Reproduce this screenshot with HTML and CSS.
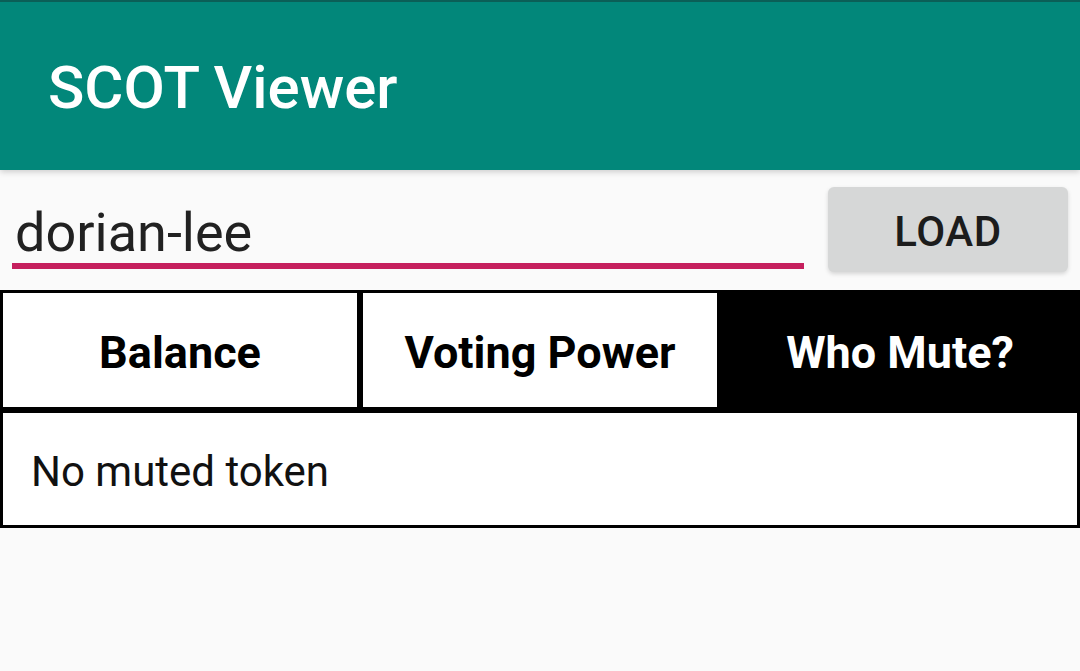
FILE: index.html
```html
<!DOCTYPE html>
<html>
<head>
<meta charset="utf-8">
<link rel="stylesheet" href="styles.css">
</head>
<body>
<header class="appbar">
  <h1 class="title">SCOT Viewer</h1>
</header>
<div class="search-row">
  <div class="field">dorian-lee</div>
  <button class="load-btn">LOAD</button>
</div>
<div class="tabs">
  <div class="tab">Balance</div>
  <div class="tab">Voting Power</div>
  <div class="tab tab-active">Who Mute?</div>
</div>
<div class="result">No muted token</div>
</body>
</html>
```

FILE: styles.css
```css
html, body {
  margin: 0;
  padding: 0;
  background: #fafafa;
  font-family: Roboto, "Noto Sans", sans-serif;
  width: 1080px;
  height: 671px;
  overflow: hidden;
}

.appbar {
  box-sizing: border-box;
  height: 170px;
  background: #02877a;
  border-top: 2px solid #0b5f57;
  display: flex;
  align-items: center;
  padding-left: 48px;
  box-shadow: 0 2px 6px rgba(0, 0, 0, 0.18);
  position: relative;
  z-index: 1;
}

.title {
  margin: 0;
  color: #ffffff;
  font-size: 60px;
  font-weight: 500;
  line-height: 1;
  padding-top: 3px;
}

.search-row {
  box-sizing: border-box;
  height: 120px;
  display: flex;
  align-items: flex-start;
  padding: 0 12px;
  gap: 24px;
}

.field {
  flex: 1;
  margin-top: 32px;
  font-size: 54px;
  line-height: 61px;
  color: #212121;
  padding-left: 3px;
  border-bottom: 6px solid #c51f5d;
}

.load-btn {
  margin-top: 17px;
  width: 240px;
  height: 85px;
  border: none;
  border-radius: 6px;
  background: #d6d7d7;
  color: #1c1c1c;
  font-family: Roboto, "Noto Sans", sans-serif;
  font-size: 42px;
  font-weight: 500;
  letter-spacing: 0.6px;
  box-shadow: 0 2px 4px rgba(0, 0, 0, 0.15);
  padding: 3px 0 0 0;
}

.tabs {
  display: flex;
  height: 120px;
}

.tab {
  flex: 1;
  box-sizing: border-box;
  border: 3px solid #000;
  background: #ffffff;
  color: #000;
  font-size: 45px;
  font-weight: 700;
  display: flex;
  align-items: center;
  justify-content: center;
  padding-top: 4px;
}

.tab-active {
  background: #000;
  color: #fff;
}

.result {
  box-sizing: border-box;
  height: 118px;
  border: 3px solid #000;
  background: #ffffff;
  color: #111;
  font-size: 42px;
  display: flex;
  align-items: center;
  padding-left: 28px;
  padding-top: 4px;
}
```
